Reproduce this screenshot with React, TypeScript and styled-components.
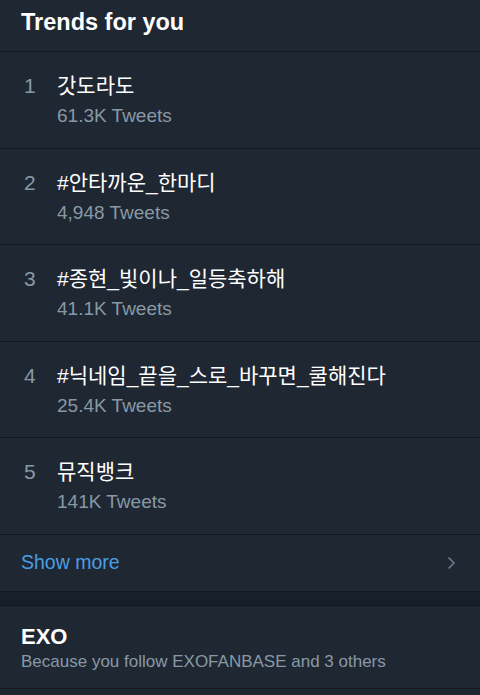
import styled, { createGlobalStyle } from "styled-components";

const GlobalStyle = createGlobalStyle`
  body {
    margin: 0;
    background: #1f2733;
    font-family: "Liberation Sans", "Noto Sans CJK KR", sans-serif;
  }
`;

const Page = styled.div`
  width: 480px;
  height: 695px;
  overflow: hidden;
  background: #1f2733;
`;

const Header = styled.h2`
  margin: 0;
  height: 52px;
  padding: 8px 21px 0;
  box-sizing: border-box;
  color: #fff;
  font-size: 23.5px;
  font-weight: 700;
  line-height: 28px;
  border-bottom: 1px solid #10171e;
`;

const Row = styled.div`
  display: flex;
  height: 96.6px;
  box-sizing: border-box;
  padding: 21px 21px 0 24px;
  border-bottom: 1px solid #10171e;
`;

const Rank = styled.div`
  width: 33px;
  color: #8899a6;
  font-size: 21px;
  line-height: 26px;
`;

const Info = styled.div`
  display: flex;
  flex-direction: column;
  gap: 6px;
`;

const Name = styled.div`
  color: #fff;
  font-size: 21px;
  line-height: 26px;
`;

const Count = styled.div`
  color: #8899a6;
  font-size: 19px;
  line-height: 22px;
`;

const ShowMore = styled.div`
  display: flex;
  align-items: center;
  justify-content: space-between;
  height: 57px;
  box-sizing: border-box;
  padding: 0 24px 0 21px;
  border-bottom: 1px solid #10171e;
  color: #4b9ee3;
  font-size: 19.5px;
`;

const Gap = styled.div`
  height: 14px;
  box-sizing: border-box;
  background: #171f29;
  border-bottom: 1px solid #10171e;
`;

const Topic = styled.div`
  padding: 19px 21px 0;
  height: 83px;
  box-sizing: border-box;
  border-bottom: 1px solid #10171e;
`;

const TopicTitle = styled.div`
  color: #fff;
  font-size: 22px;
  font-weight: 700;
  line-height: 24px;
`;

const TopicSub = styled.div`
  margin-top: 2px;
  color: #8899a6;
  font-size: 17px;
  line-height: 22px;
`;

const trends = [
  { name: "갓도라도", count: "61.3K Tweets" },
  { name: "#안타까운_한마디", count: "4,948 Tweets" },
  { name: "#종현_빛이나_일등축하해", count: "41.1K Tweets" },
  { name: "#닉네임_끝을_스로_바꾸면_쿨해진다", count: "25.4K Tweets" },
  { name: "뮤직뱅크", count: "141K Tweets" },
];

const App = () => (
  <Page>
    <GlobalStyle />
    <Header>Trends for you</Header>
    {trends.map((t, i) => (
      <Row key={i}>
        <Rank>{i + 1}</Rank>
        <Info>
          <Name>{t.name}</Name>
          <Count>{t.count}</Count>
        </Info>
      </Row>
    ))}
    <ShowMore>
      <span>Show more</span>
      <svg width="9" height="14" viewBox="0 0 9 14">
        <path d="M1.5 1.5 L7 7 L1.5 12.5" fill="none" stroke="#6e7d8c" strokeWidth="1.6" />
      </svg>
    </ShowMore>
    <Gap />
    <Topic>
      <TopicTitle>EXO</TopicTitle>
      <TopicSub>Because you follow EXOFANBASE and 3 others</TopicSub>
    </Topic>
  </Page>
);

export default App;
